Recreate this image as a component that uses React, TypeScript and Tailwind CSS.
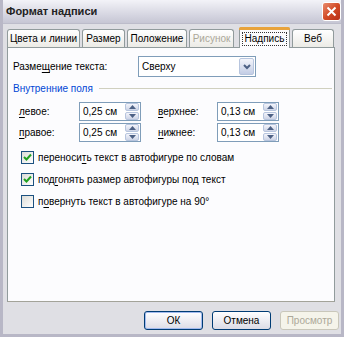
import React from 'react'

const font = { fontFamily: '"Liberation Sans", Arial, sans-serif' }

function U({ children }: { children: React.ReactNode }) {
  return <span className="underline underline-offset-2">{children}</span>
}

function Tab({ label, w, active, disabled }: { label: string; w: string; active?: boolean; disabled?: boolean }) {
  if (active) {
    return (
      <div className={`${w} shrink-0 h-[21px] -mb-px relative z-10 bg-[#fcfcfe] border border-b-0 border-[#919b9c] rounded-t-[3px] flex flex-col whitespace-nowrap`}>
        <div className="h-[3px] bg-[#e8a33b] rounded-t-[2px] -mx-px -mt-px"></div>
        <div className="flex-1 flex items-center justify-center">
          <span className="border border-[#333] border-dotted px-[2px] leading-[12px]">{label}</span>
        </div>
      </div>
    )
  }
  return (
    <div className={`${w} shrink-0 h-[18px] whitespace-nowrap border border-b-0 border-[#919b9c] rounded-t-[3px] bg-gradient-to-b from-[#ffffff] to-[#ecebe6] flex items-center justify-center ${disabled ? 'text-[#aca899]' : 'text-black'}`}>
      {label}
    </div>
  )
}

function Spin({ value }: { value: string }) {
  return (
    <div className="w-[62px] h-[19px] border border-[#7f9db9] bg-white flex items-center">
      <span className="flex-1 pl-[3px]">{value}</span>
      <div className="w-[14px] h-[17px] mr-px flex flex-col gap-px">
        <div className="flex-1 rounded-[2px] border border-[#b7c5de] bg-gradient-to-b from-[#f4f5fb] to-[#cdd4e6] flex items-center justify-center">
          <svg width="7" height="4" viewBox="0 0 7 4"><path d="M0 4 L3.5 0 L7 4 Z" fill="#4d6185" /></svg>
        </div>
        <div className="flex-1 rounded-[2px] border border-[#b7c5de] bg-gradient-to-b from-[#f4f5fb] to-[#cdd4e6] flex items-center justify-center">
          <svg width="7" height="4" viewBox="0 0 7 4"><path d="M0 0 L3.5 4 L7 0 Z" fill="#4d6185" /></svg>
        </div>
      </div>
    </div>
  )
}

function Check({ checked, children }: { checked?: boolean; children: React.ReactNode }) {
  return (
    <div className="flex items-center h-[13px]">
      <div className="w-[13px] h-[13px] border border-[#1c5180] bg-gradient-to-br from-[#dcdcd7] to-[#ffffff] flex items-center justify-center">
        {checked && (
          <svg width="9" height="9" viewBox="0 0 9 9">
            <path d="M1 4 L3.5 6.5 L8 1.5" stroke="#21a121" strokeWidth="2" fill="none" />
          </svg>
        )}
      </div>
      <span className="ml-[4px]">{children}</span>
    </div>
  )
}

function Btn({ children, primary, disabled }: { children: React.ReactNode; primary?: boolean; disabled?: boolean }) {
  return (
    <div
      className={`w-[59px] h-[19px] rounded-[3px] border flex items-center justify-center ${
        disabled
          ? 'border-[#c9c7ba] bg-[#f5f4ea] text-[#aca899]'
          : 'border-[#003c74] bg-gradient-to-b from-[#ffffff] to-[#dcdce6] text-black'
      } ${primary ? 'shadow-[inset_0_0_0_1px_#a3bbef]' : ''}`}
    >
      {children}
    </div>
  )
}

export default function App() {
  return (
    <div style={font} className="w-[344px] h-[337px] bg-[#dfdfe4] border-x-[3px] border-b-[3px] border-[#b8b7c6] flex flex-col text-[10px] text-black overflow-hidden">
      {/* Title bar */}
      <div className="h-[24px] shrink-0 -mx-[3px] bg-gradient-to-b from-[#f3f3f8] via-[#dcdce6] to-[#c6c6d4] flex items-center pl-[6px] pr-[3px] border-b border-[#bcbcca]">
        <span className="flex-1 font-bold text-[11px] text-[#222]">Формат надписи</span>
        <div className="w-[19px] h-[19px] rounded-[3px] border border-white bg-gradient-to-br from-[#e88a6c] via-[#d24a25] to-[#b8311a] flex items-center justify-center">
          <svg width="11" height="11" viewBox="0 0 11 11">
            <path d="M1.5 1.5 L9.5 9.5 M9.5 1.5 L1.5 9.5" stroke="#fff" strokeWidth="2" />
          </svg>
        </div>
      </div>

      {/* Tabs */}
      <div className="ml-[4px] mt-[2px] flex items-end gap-[2px] h-[21px] shrink-0">
        <Tab label="Цвета и линии" w="w-[73px]" />
        <Tab label="Размер" w="w-[43px]" />
        <Tab label="Положение" w="w-[60px]" />
        <Tab label="Рисунок" w="w-[45px]" disabled />
        <div className="w-px shrink-0"></div>
        <Tab label="Надпись" w="w-[51px]" active />
        <Tab label="Веб" w="w-[42px]" />
      </div>

      {/* Panel */}
      <div className="ml-[4px] w-[328px] h-[255px] shrink-0 bg-[#fcfcfe] border border-[#919b9c] border-b-[#a3a399] flex flex-col">
        <div className="flex items-center mt-[8px] h-[21px]">
          <span className="ml-[5px] w-[125px]">Разме<U>щ</U>ение текста:</span>
          <div className="w-[118px] h-[21px] border border-[#7f9db9] bg-white flex items-center">
            <span className="flex-1 pl-[3px]">Сверху</span>
            <div className="w-[15px] h-[17px] mr-px rounded-[2px] border border-[#b7c5de] bg-gradient-to-b from-[#f4f5fb] to-[#c3cde5] flex items-center justify-center">
              <svg width="8" height="6" viewBox="0 0 8 6"><path d="M1 1 L4 4 L7 1" stroke="#4d6185" strokeWidth="2" fill="none" /></svg>
            </div>
          </div>
        </div>

        <div className="flex items-center mt-[5px] ml-[5px] mr-[2px] h-[13px]">
          <span className="text-[#0046d5]">Внутренние поля</span>
          <div className="flex-1 h-px bg-[#d0d0bf] ml-[6px]"></div>
        </div>

        <div className="flex items-center mt-[7px] h-[19px]">
          <span className="ml-[11px] w-[60px]"><U>л</U>евое:</span>
          <Spin value="0,25 см" />
          <span className="ml-[17px] w-[59px]"><U>в</U>ерхнее:</span>
          <Spin value="0,13 см" />
        </div>
        <div className="flex items-center mt-[2px] h-[19px]">
          <span className="ml-[11px] w-[60px]"><U>п</U>равое:</span>
          <Spin value="0,25 см" />
          <span className="ml-[17px] w-[59px]"><U>н</U>ижнее:</span>
          <Spin value="0,13 см" />
        </div>

        <div className="ml-[13px] mt-[9px] flex flex-col gap-[9px]">
          <Check checked>переноси<U>т</U>ь текст в автофигуре по словам</Check>
          <Check checked>под<U>г</U>онять размер автофигуры под текст</Check>
          <Check>п<U>о</U>вернуть текст в автофигуре на 90°</Check>
        </div>
      </div>

      {/* Buttons */}
      <div className="flex justify-end gap-[9px] mt-[9px] mr-[2px]">
        <Btn primary>ОК</Btn>
        <Btn>Отмена</Btn>
        <Btn disabled>Просмотр</Btn>
      </div>
    </div>
  )
}
